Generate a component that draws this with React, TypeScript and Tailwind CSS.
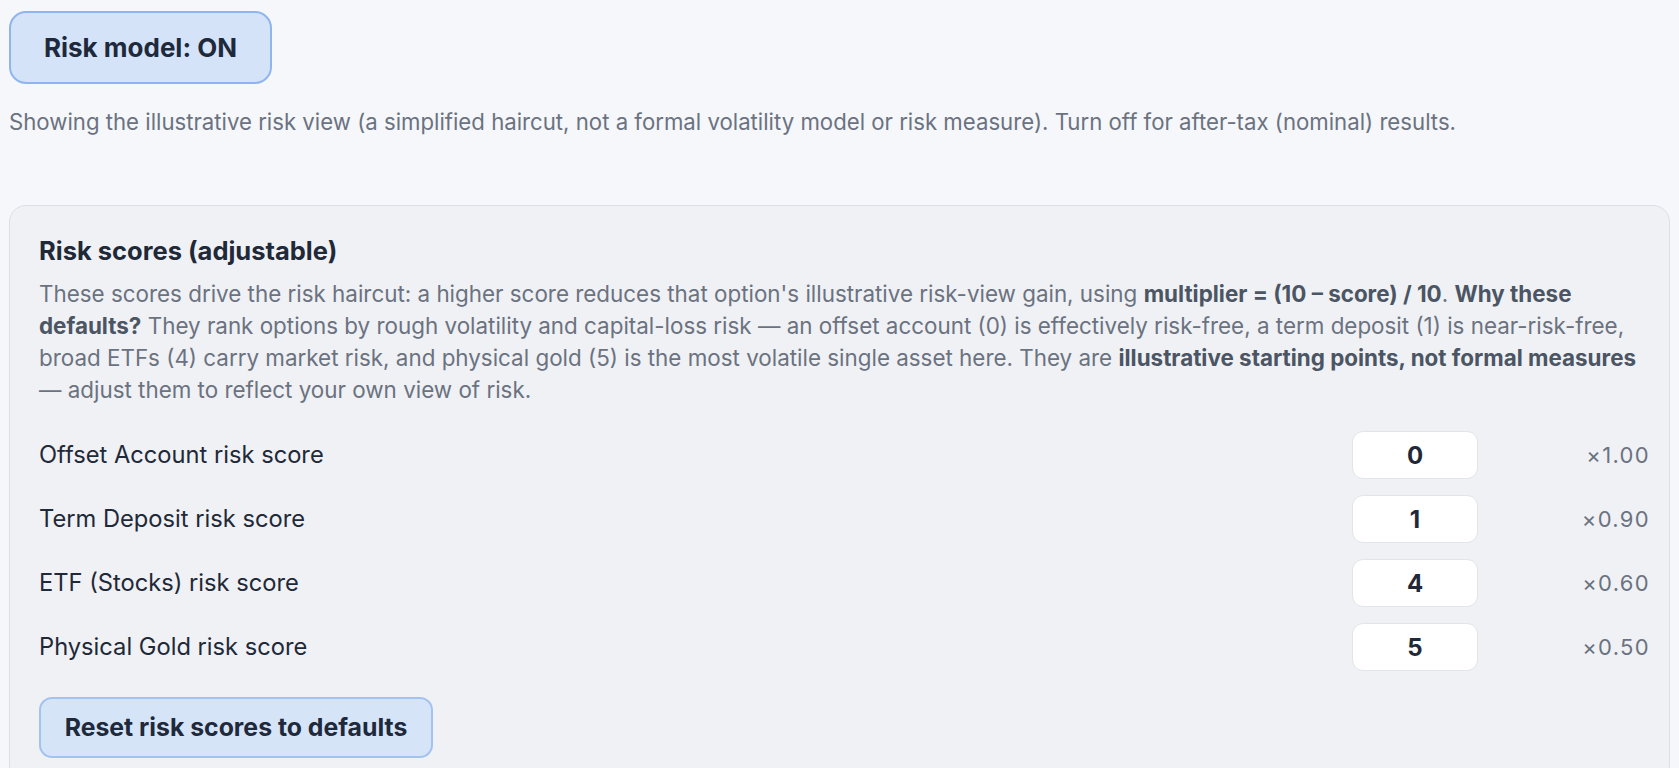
import { useState } from "react";

const defaults = [
  { key: "offset", label: "Offset Account risk score", score: 0 },
  { key: "term", label: "Term Deposit risk score", score: 1 },
  { key: "etf", label: "ETF (Stocks) risk score", score: 4 },
  { key: "gold", label: "Physical Gold risk score", score: 5 },
];

export default function App() {
  const [riskOn, setRiskOn] = useState(true);
  const [scores, setScores] = useState<Record<string, number>>(
    Object.fromEntries(defaults.map((d) => [d.key, d.score])),
  );

  const multiplier = (score: number) => `×${((10 - score) / 10).toFixed(2)}`;

  return (
    <div className="min-h-screen bg-[#f5f7fb] px-[9px] pt-[11px] font-['Inter','Liberation_Sans',sans-serif] text-[#1f2937]">
      <button
        onClick={() => setRiskOn(!riskOn)}
        className="h-[73px] w-[263px] rounded-[17px] border-2 border-[#90b5ee] bg-[#d4e3f8] text-[26px] font-bold text-[#1e293b]"
      >
        Risk model: {riskOn ? "ON" : "OFF"}
      </button>

      <p className="mt-[24px] text-[22.2px] leading-[28px] text-[#6b7280]">
        Showing the illustrative risk view (a simplified haircut, not a formal
        volatility model or risk measure). Turn off for after-tax (nominal)
        results.
      </p>

      <section className="mt-[69px] rounded-[17px] border border-[#dcdfe5] bg-[#eff1f5] pb-[24px] pl-[29px] pr-[19px] pt-[29px]">
        <h2 className="text-[25.5px] font-bold leading-[32px] text-[#1f2937]">
          Risk scores (adjustable)
        </h2>
        <p className="mt-[11px] text-[22.4px] leading-[32px] text-[#6b7280]">
          These scores drive the risk haircut: a higher score reduces that
          option's illustrative risk-view gain, using{" "}
          <strong className="font-bold text-[#4b5563]">
            multiplier = (10 – score) / 10
          </strong>
          .{" "}
          <strong className="font-bold text-[#4b5563]">
            Why these defaults?
          </strong>{" "}
          They rank options by rough volatility and capital-loss risk — an
          offset account (0) is effectively risk-free, a term deposit (1) is
          near-risk-free, broad ETFs (4) carry market risk, and physical gold
          (5) is the most volatile single asset here. They are{" "}
          <strong className="font-bold text-[#4b5563]">
            illustrative starting points, not formal measures
          </strong>{" "}
          — adjust them to reflect your own view of risk.
        </p>

        <div className="mt-[25px] flex flex-col gap-[16px]">
          {defaults.map((d) => (
            <div key={d.key} className="flex items-center">
              <label className="flex-1 text-[23.7px] text-[#1f2937]">
                {d.label}
              </label>
              <input
                type="text"
                value={scores[d.key]}
                onChange={(e) =>
                  setScores({ ...scores, [d.key]: Number(e.target.value) || 0 })
                }
                className="h-[48px] w-[126px] rounded-[11px] border border-[#e2e4e9] bg-white text-center text-[24px] font-bold text-[#1f2937] outline-none"
              />
              <span className="w-[172px] text-right text-[22px] tracking-[0.06em] text-[#6b7280]">
                {multiplier(scores[d.key])}
              </span>
            </div>
          ))}
        </div>

        <button
          onClick={() =>
            setScores(Object.fromEntries(defaults.map((d) => [d.key, d.score])))
          }
          className="mt-[26px] h-[61px] w-[394px] rounded-[13px] border-2 border-[#a3c2f0] bg-[#d6e4f7] text-[24.8px] font-bold text-[#1e293b]"
        >
          Reset risk scores to defaults
        </button>
      </section>
    </div>
  );
}
